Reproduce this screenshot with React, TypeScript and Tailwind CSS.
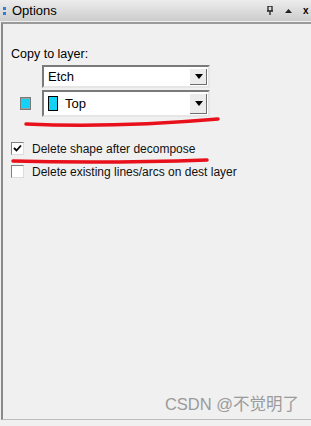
import React from 'react';

const FONT = { fontFamily: '"Liberation Sans", Arial, sans-serif' };

const ComboArrow: React.FC = () => (
  <div className="flex h-full w-[18px] items-center justify-center border-l border-t border-l-[#ffffff] border-t-[#ffffff] bg-[#ececec] shadow-[inset_-1px_-1px_0_#6d6d6d]">
    <svg width="8" height="5" viewBox="0 0 8 5">
      <path d="M0 0 H8 L4 5 Z" fill="#000" />
    </svg>
  </div>
);

const Combo: React.FC<{ label: string; swatch?: boolean; h: string }> = ({ label, swatch, h }) => (
  <div className={`flex ${h} w-[168px] items-stretch border-2 border-t-[#7a7a7a] border-l-[#7a7a7a] border-b-[#e6e6e6] border-r-[#e6e6e6] bg-white p-[1px]`}>
    <div className="flex flex-1 items-center gap-[7px] pl-[3px] text-[13px] text-black">
      {swatch && <div className="h-[15px] w-[10px] border border-black bg-[#14d2f5]" />}
      <span>{label}</span>
    </div>
    <ComboArrow />
  </div>
);

const Checkbox: React.FC<{ checked?: boolean; label: string }> = ({ checked, label }) => (
  <div className="flex items-center gap-[8px]">
    <div className="flex h-[13px] w-[13px] items-center justify-center border border-t-[#808080] border-l-[#808080] border-b-[#dcdcdc] border-r-[#dcdcdc] bg-white">
      {checked && (
        <svg width="9" height="9" viewBox="0 0 9 9">
          <path d="M1 4 L3.5 6.5 L8 1.5" stroke="#000" strokeWidth="1.8" fill="none" />
        </svg>
      )}
    </div>
    <span className="text-[12px] leading-[16px] text-[#111]">{label}</span>
  </div>
);

export default function App() {
  return (
    <div className="relative flex h-[426px] w-[311px] flex-col overflow-hidden bg-[#f0f0f0]" style={FONT}>
      {/* title bar */}
      <div className="flex h-[21px] items-center bg-gradient-to-b from-[#ececec] to-[#cdcdcd] pl-[3px] pr-0">
        <div className="mr-[6px] flex flex-col gap-[2px]">
          <div className="h-[3px] w-[3px] bg-[#2f7fd8]" />
          <div className="h-[3px] w-[3px] bg-[#2f7fd8]" />
        </div>
        <span className="text-[13px] text-black">Options</span>
        <div className="ml-auto flex items-center gap-[8px] text-[10px] text-black">
          <svg width="8" height="9" viewBox="0 0 8 9">
            <path d="M2 0 V5 M6 0 V5 M1 5 H7 M4 5 V9 M2 0 H6" stroke="#222" strokeWidth="1.3" fill="none" />
          </svg>
          <svg width="7" height="4" viewBox="0 0 7 4" className="ml-[3px]">
            <path d="M0 4 H7 L3.5 0 Z" fill="#222" />
          </svg>
          <span className="ml-[3px] w-[8px] overflow-hidden font-bold">x</span>
        </div>
      </div>

      {/* content panel */}
      <div className="mt-[1px] ml-[1px] mb-[6px] flex flex-1 flex-col border-t-2 border-l-2 border-t-[#9a9a9a] border-l-[#8a8a8a] border-b border-b-[#bdbdbd] pl-[8px] pt-[21px]">
        <span className="text-[12.5px] text-black">Copy to layer:</span>
        <div className="mt-[1px] flex flex-col gap-[2px]">
          <div className="pl-[31px]">
            <Combo label="Etch" h="h-[23px]" />
          </div>
          <div className="flex items-center">
            <div className="ml-[9px] mr-[11px] flex h-[13px] w-[11px] items-center justify-center border border-[#7a7a7a] bg-[#9aa0a0] p-[1px]">
              <div className="h-full w-full bg-[#14d2f5]" />
            </div>
            <Combo label="Top" swatch h="h-[27px]" />
          </div>
        </div>
        <div className="mt-[24px] flex flex-col gap-[7px]">
          <Checkbox checked label="Delete shape after decompose" />
          <Checkbox label="Delete existing lines/arcs on dest layer" />
        </div>
        <div className="mt-auto mb-[2px] pr-[12px] text-right text-[16.5px] text-[#9a9a9a]" style={{ fontFamily: '"Liberation Sans", "Noto Sans CJK SC", sans-serif' }}>
          CSDN @不觉明了
        </div>
      </div>

      {/* red annotation strokes */}
      <svg className="pointer-events-none absolute left-0 top-0" width="311" height="426">
        <path d="M26 124 C 90 127, 160 124, 218 119" stroke="#e8101a" strokeWidth="3.5" fill="none" strokeLinecap="round" />
        <path d="M13 161 C 80 163, 150 162, 207 160" stroke="#e8101a" strokeWidth="3.5" fill="none" strokeLinecap="round" />
      </svg>
    </div>
  );
}
